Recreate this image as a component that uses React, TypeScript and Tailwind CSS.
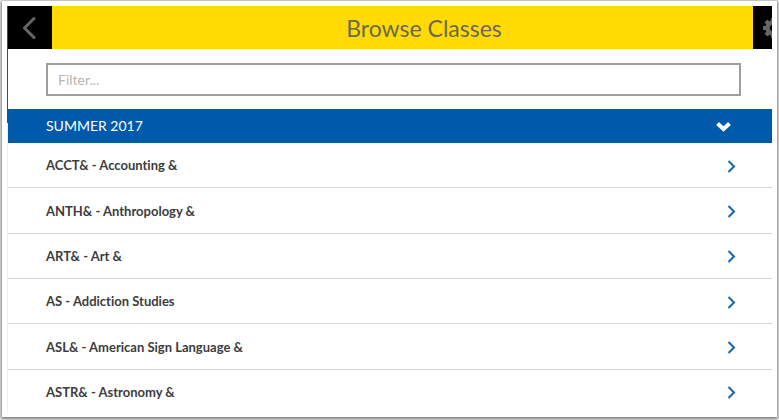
import { useState } from "react";

const subjects = [
  "ACCT& - Accounting &",
  "ANTH& - Anthropology &",
  "ART& - Art &",
  "AS - Addiction Studies",
  "ASL& - American Sign Language &",
  "ASTR& - Astronomy &",
];

function GearIcon() {
  return (
    <svg className="shrink-0" width="20" height="20" viewBox="0 128 1536 1536" fill="currentColor">
      <path d="M1024 896q0-106-75-181t-181-75-181 75-75 181 75 181 181 75 181-75 75-181zm512-109v222q0 12-8 23t-20 13l-185 28q-19 54-39 91 35 50 107 138 10 12 10 25t-9 23q-27 37-99 108t-94 71q-12 0-26-9l-138-108q-44 23-91 38-16 136-29 186-7 28-36 28h-222q-14 0-24.5-8.5t-11.5-21.5l-28-184q-49-16-90-37l-141 107q-10 9-25 9-14 0-25-11-126-114-165-168-7-10-7-23 0-12 8-23 15-21 51-66.5t54-70.5q-27-50-41-99l-183-27q-13-2-21-12.5t-8-23.500v-222q0-12 8-23t19-13l186-28q14-46 39-92-40-57-107-138-10-12-10-24 0-10 9-23 26-36 98.5-107.5t94.5-71.5q13 0 26 10l138 107q44-23 91-38 16-136 29-186 7-28 36-28h222q14 0 24.5 8.5t11.5 21.5l28 184q49 16 90 37l142-107q9-9 24-9 13 0 25 10 129 119 165 170 7 8 7 22 0 12-8 23-15 21-51 66.5t-54 70.5q26 50 41 98l183 28q13 2 21 12.5t8 23.5z" />
    </svg>
  );
}

function Header() {
  return (
    <header className="-mr-6 flex h-[43px] bg-[#ffdb03]">
      <button type="button" aria-label="Back" className="flex w-11 shrink-0 items-center bg-black pl-[14px]">
        <svg width="14" height="24" viewBox="0 0 14 24" fill="none" stroke="#666" strokeWidth="3" strokeLinecap="round" strokeLinejoin="round">
          <path d="M12 2.5 2.5 12 12 21.5" />
        </svg>
      </button>
      <h1 className="flex flex-1 items-center justify-center pl-[43px] text-[23px] leading-8 text-[#6b6953]">
        Browse Classes
      </h1>
      <button type="button" aria-label="Settings" className="flex w-[43px] shrink-0 items-center bg-black pl-[10px] text-[#666]">
        <GearIcon />
      </button>
    </header>
  );
}

export default function App() {
  const [filter, setFilter] = useState("");
  return (
    <div className="h-screen bg-[#f4f4f4] pt-px pr-[2px] pb-[3px] pl-[2px] font-['Lato','Open_Sans',sans-serif] [font-variant-ligatures:none]">
      <div className="h-full bg-white px-[5px] py-[5px] shadow-[0_1px_3px_1px_#777]">
        <main className="relative h-full border-l border-[#eeeeee]">
          <span className="absolute top-0 -left-px h-[117px] w-px bg-[#0059a9]" />
          <div className="h-full overflow-hidden">
            <Header />
            <div className="pt-[14px] pr-[31px] pb-[13px] pl-[38px]">
              <input
                type="text"
                aria-label="Filter classes"
                placeholder="Filter..."
                value={filter}
                onChange={(e) => setFilter(e.target.value)}
                className="block h-[33px] w-full border-2 border-[#9e9e9e] bg-white px-[10px] text-sm text-[#3c3c3c] placeholder:text-[#b5b5b5]"
              />
            </div>
            <button
              type="button"
              aria-expanded="true"
              className="flex h-[34px] w-full items-center justify-between bg-[#0059a9] pr-[41px] pl-[38px] text-left text-sm text-white"
            >
              SUMMER 2017
              <svg width="15" height="11" viewBox="0 0 15 11" fill="none" stroke="currentColor" strokeWidth="4">
                <path d="M1.500 2.500 7.500 8 13.500 2.500" />
              </svg>
            </button>
            <ul className="grid h-[272px] auto-rows-fr">
              {subjects.map((name) => (
                <li key={name} className="border-b border-[#d6d6d6]">
                  <a href="#" className="flex h-full items-center justify-between pt-[2px] pr-9 pl-[38px] text-[13px] font-bold text-[#3c3c3c]">
                    {name}
                    <svg width="9" height="13" viewBox="0 0 9 13" fill="none" stroke="#1763ae" strokeWidth="2">
                      <path d="M1.500 1 7 6.500 1.500 12" />
                    </svg>
                  </a>
                </li>
              ))}
            </ul>
          </div>
        </main>
      </div>
    </div>
  );
}
